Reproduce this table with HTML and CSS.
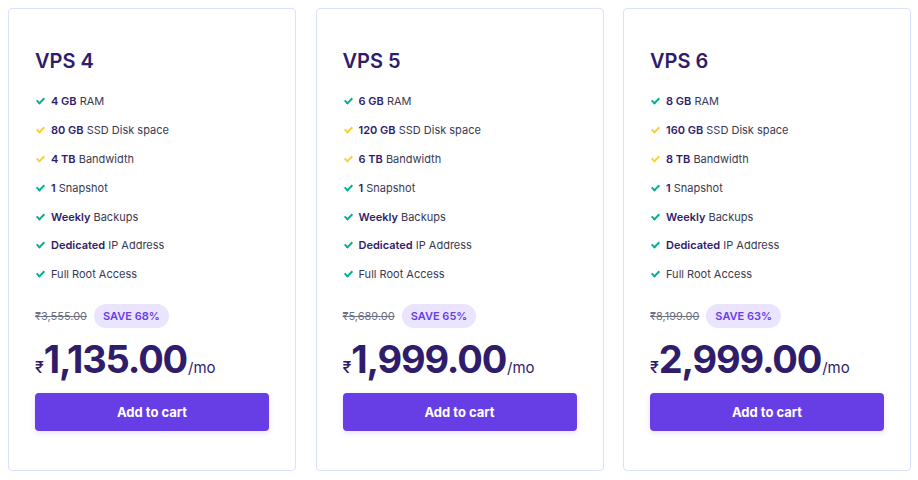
FILE: index.html
```html
<!DOCTYPE html>
<html>
<head>
<meta charset="utf-8">
<link rel="stylesheet" href="styles.css">
</head>
<body>
<div class="plans">
  <div class="card">
    <h2 class="title">VPS 4</h2>
    <ul class="features">
      <li><span class="chk green"></span><b>4 GB</b>&nbsp;RAM</li>
      <li><span class="chk yellow"></span><b>80 GB</b>&nbsp;SSD Disk space</li>
      <li><span class="chk yellow"></span><b>4 TB</b>&nbsp;Bandwidth</li>
      <li><span class="chk green"></span><b>1</b>&nbsp;Snapshot</li>
      <li><span class="chk green"></span><b>Weekly</b>&nbsp;Backups</li>
      <li><span class="chk green"></span><b>Dedicated</b>&nbsp;IP Address</li>
      <li><span class="chk green"></span>Full Root Access</li>
    </ul>
    <div class="save-row"><s class="old">₹3,555.00</s><span class="badge">SAVE 68%</span></div>
    <div class="price"><span class="cur">₹</span><span class="amount">1,135.00</span><span class="per">/mo</span></div>
    <button class="cart">Add to cart</button>
  </div>
  <div class="card">
    <h2 class="title">VPS 5</h2>
    <ul class="features">
      <li><span class="chk green"></span><b>6 GB</b>&nbsp;RAM</li>
      <li><span class="chk yellow"></span><b>120 GB</b>&nbsp;SSD Disk space</li>
      <li><span class="chk yellow"></span><b>6 TB</b>&nbsp;Bandwidth</li>
      <li><span class="chk green"></span><b>1</b>&nbsp;Snapshot</li>
      <li><span class="chk green"></span><b>Weekly</b>&nbsp;Backups</li>
      <li><span class="chk green"></span><b>Dedicated</b>&nbsp;IP Address</li>
      <li><span class="chk green"></span>Full Root Access</li>
    </ul>
    <div class="save-row"><s class="old">₹5,689.00</s><span class="badge">SAVE 65%</span></div>
    <div class="price"><span class="cur">₹</span><span class="amount">1,999.00</span><span class="per">/mo</span></div>
    <button class="cart">Add to cart</button>
  </div>
  <div class="card">
    <h2 class="title">VPS 6</h2>
    <ul class="features">
      <li><span class="chk green"></span><b>8 GB</b>&nbsp;RAM</li>
      <li><span class="chk yellow"></span><b>160 GB</b>&nbsp;SSD Disk space</li>
      <li><span class="chk yellow"></span><b>8 TB</b>&nbsp;Bandwidth</li>
      <li><span class="chk green"></span><b>1</b>&nbsp;Snapshot</li>
      <li><span class="chk green"></span><b>Weekly</b>&nbsp;Backups</li>
      <li><span class="chk green"></span><b>Dedicated</b>&nbsp;IP Address</li>
      <li><span class="chk green"></span>Full Root Access</li>
    </ul>
    <div class="save-row"><s class="old">₹8,199.00</s><span class="badge">SAVE 63%</span></div>
    <div class="price"><span class="cur">₹</span><span class="amount">2,999.00</span><span class="per">/mo</span></div>
    <button class="cart">Add to cart</button>
  </div>
</div>
</body>
</html>
```
FILE: styles.css
```css
html, body {
  margin: 0;
  padding: 0;
  background: #fff;
}
body {
  font-family: "Inter", "Noto Sans", sans-serif;
  color: #2f1c6a;
}
.plans {
  display: flex;
  gap: 19.5px;
  padding: 8px 0 0 8px;
}
.card {
  box-sizing: border-box;
  width: 288px;
  height: 463px;
  border: 1px solid #dae1fb;
  border-radius: 4px;
  padding: 40px 26px 0 26px;
  display: flex;
  flex-direction: column;
}
.title {
  margin: 0;
  font-size: 20px;
  line-height: 24px;
  font-weight: 600;
  color: #2f1c6a;
}
.features {
  list-style: none;
  margin: 14px 0 0 0;
  padding: 0;
}
.features li {
  display: flex;
  align-items: center;
  height: 28.8px;
  font-size: 11px;
  color: #3b3950;
}
.features b {
  font-weight: 600;
  color: #2f1c6a;
}
.chk {
  display: inline-block;
  width: 10px;
  height: 10px;
  margin-right: 6px;
  position: relative;
}
.chk::after {
  content: "";
  position: absolute;
  left: 3px;
  top: 0px;
  width: 3px;
  height: 6px;
  border-right: 2px solid currentColor;
  border-bottom: 2px solid currentColor;
  transform: rotate(45deg);
}
.chk.green { color: #00b090; }
.chk.yellow { color: #ffcd35; }
.save-row {
  display: flex;
  align-items: center;
  margin-top: 15px;
  height: 24px;
}
.old {
  font-size: 11px;
  color: #6d7081;
  margin-right: 7px;
}
.badge {
  background: #ebe4ff;
  color: #673de6;
  font-size: 11px;
  font-weight: 600;
  height: 24px;
  line-height: 24px;
  padding: 0 9px;
  border-radius: 12px;
}
.price {
  display: flex;
  align-items: baseline;
  margin-top: 10px;
  height: 42px;
  color: #2f1c6a;
}
.cur {
  font-size: 16px;
  font-weight: 500;
}
.amount {
  font-size: 38px;
  font-weight: 700;
  letter-spacing: -1.2px;
  line-height: 42px;
}
.per {
  font-size: 15px;
  color: #2f1c6a;
  margin-left: 1px;
}
.cart {
  margin-top: 13px;
  height: 38px;
  width: 100%;
  border: 0;
  border-radius: 4px;
  background: #673de6;
  color: #fff;
  font-family: "Inter", "Noto Sans", sans-serif;
  font-size: 13px;
  font-weight: 700;
  box-shadow: 0 2px 6px rgba(103, 61, 230, 0.15);
}
```
